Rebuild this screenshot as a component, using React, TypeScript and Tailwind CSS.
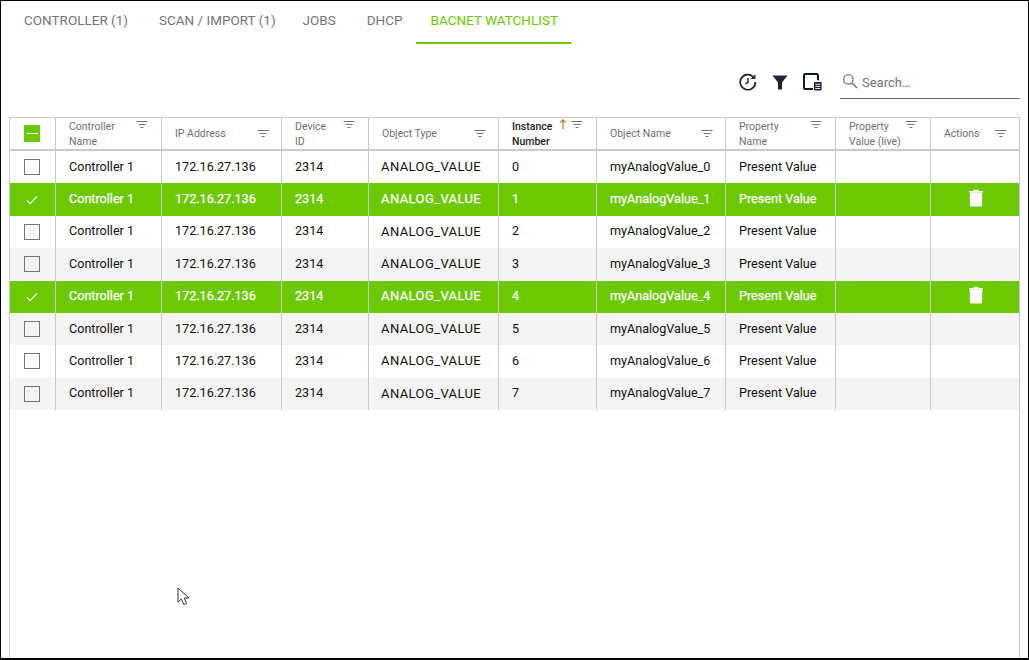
import React from "react";

const cols = "grid-cols-[45px_106px_120px_87px_130px_98px_129px_110px_95px_89px]";

function FilterIcon() {
  return (
    <svg width="12" height="8" viewBox="0 0 12 8" className="shrink-0 block">
      <path d="M0.5 0.5h11M2.5 3.5h7M4.5 6.5h3" stroke="#757575" strokeWidth="1" fill="none" />
    </svg>
  );
}

function Head({ lines, active, sort }: { lines: string[]; active?: boolean; sort?: boolean }) {
  const two = lines.length > 1;
  return (
    <div className={`border-l border-[#c9c9c9] pl-[13px] ${two ? "pr-[13px]" : "pr-[12px]"} flex relative h-full items-center justify-between`}>
      <div className={`text-[10.5px] leading-[15px] ${active ? "text-[#222] font-medium" : "text-[#6f6f6f]"}`}>
        {lines.map((l) => (
          <div key={l} className="whitespace-nowrap">{l}</div>
        ))}
      </div>
      <div className={`flex items-center ${two ? "self-start mt-[3px]" : ""}`}>
        {sort && (
          <svg width="8" height="11" viewBox="0 0 8 11" className="absolute left-[60px] top-[1px]">
            <path d="M4 10.5V1M1.2 3.6L4 0.8L6.8 3.6" stroke="#b5761e" strokeWidth="1.1" fill="none" />
          </svg>
        )}
        <FilterIcon />
      </div>
    </div>
  );
}

function Cell({ children, center }: { children?: React.ReactNode; center?: boolean }) {
  return (
    <div className={`border-l border-[#c9c9c9] h-full flex items-center ${center ? "justify-center" : "pl-[13px]"} whitespace-nowrap`}>
      {children}
    </div>
  );
}

function Trash() {
  return (
    <svg width="16" height="18" viewBox="0 0 16 18" className="-mt-[3px] ml-[2px]">
      <path d="M1 2h14v1.4H1zM5.5 0.8h5v1.4h-5z" fill="#fff" />
      <path d="M1.8 3.6h12.4V16a1.5 1.5 0 0 1-1.5 1.5H3.3A1.5 1.5 0 0 1 1.8 16z" fill="#fff" />
    </svg>
  );
}

export default function App() {
  const rows = [0, 1, 2, 3, 4, 5, 6, 7];
  return (
    <div className="w-[1029px] h-[660px] border border-black border-b-2 bg-white font-['Roboto',sans-serif] overflow-hidden flex flex-col relative">
      <div className="flex h-[43px] pl-2 text-[13.5px] text-[#757575]">
        <div className="pl-[15px] pr-[17px] pt-[11px] leading-[16px] whitespace-nowrap">CONTROLLER (1)</div>
        <div className="pl-[14px] pr-[12px] pt-[11px] leading-[16px] whitespace-nowrap">SCAN / IMPORT (1)</div>
        <div className="pl-[15px] pr-[16px] pt-[11px] leading-[16px] whitespace-nowrap">JOBS</div>
        <div className="pl-[15px] pr-[13px] pt-[11px] leading-[16px] whitespace-nowrap">DHCP</div>
        <div className="px-[15px] pt-[11px] leading-[16px] whitespace-nowrap text-[#6fc400] border-b-2 border-[#74c200] w-[155px]">BACNET WATCHLIST</div>
      </div>

      <div className="flex items-start h-[73px] pr-[8px] justify-end">
        <div className="flex items-center mt-[29px] mr-[18px] gap-[15px]">
          <svg width="18" height="18" viewBox="0 0 18 18">
            <path d="M14 3.6A7.6 7.6 0 1 0 16.4 9" stroke="#1b2430" strokeWidth="1.7" fill="none" />
            <path d="M16.4 1.2v4.8h-4.8z" fill="#1b2430" />
            <path d="M9 5v4.4l-2.6 1.6" stroke="#1b2430" strokeWidth="1.4" fill="none" />
          </svg>
          <svg width="16" height="15" viewBox="0 0 16 15">
            <path d="M0.5 0.5h15L10 7.6V14.5H6V7.6z" fill="#1b2430" />
          </svg>
          <svg width="19" height="18" viewBox="0 0 19 18">
            <path d="M10 16H2.2A1.2 1.2 0 0 1 1 14.8V2.2A1.2 1.2 0 0 1 2.2 1h11.6A1.2 1.2 0 0 1 15 2.2v5" stroke="#111827" strokeWidth="2" fill="none" />
            <rect x="11" y="9" width="7.6" height="8.6" rx="1" fill="#1b2430" />
            <path d="M12.4 11.3h4.8M12.4 13.4h4.8M12.4 15.5h4.8" stroke="#fff" strokeWidth="0.9" />
          </svg>
        </div>
        <div className="w-[180px] h-[34px] mt-[21px] border-b border-[#6b6b6b] flex items-center pl-[2px] gap-[4px] pt-[2px]">
          <svg width="16" height="16" viewBox="0 0 16 16" className="-mt-[3px]">
            <circle cx="6.4" cy="6.4" r="4.7" stroke="#757575" strokeWidth="1.3" fill="none" />
            <path d="M10 10l5 5" stroke="#757575" strokeWidth="1.6" />
          </svg>
          <span className="text-[13px] text-[#757575]">Search…</span>
        </div>
      </div>

      <div className="ml-[8px] w-[1011px] flex-1 border-x border-t border-[#c9c9c9] text-[12.6px] text-[#111]">
        <div className={`grid ${cols} h-[33px] border-b-2 border-[#cdc9c7]`}>
          <div className="flex items-center justify-center h-full">
            <div className="w-[16px] h-[17px] mr-px bg-[#6cc800] flex items-center justify-center">
              <div className="w-[11px] h-px bg-white" />
            </div>
          </div>
          <Head lines={["Controller", "Name"]} />
          <Head lines={["IP Address"]} />
          <Head lines={["Device", "ID"]} />
          <Head lines={["Object Type"]} />
          <Head lines={["Instance", "Number"]} active sort />
          <Head lines={["Object Name"]} />
          <Head lines={["Property", "Name"]} />
          <Head lines={["Property", "Value (live)"]} />
          <Head lines={["Actions"]} />
        </div>
        {rows.map((i) => {
          const sel = i === 1 || i === 4;
          const bg = sel ? "bg-[#6cc800] text-white [-webkit-text-stroke:0.25px_white]" : i % 2 === 1 ? "bg-[#f4f4f4]" : "bg-white";
          return (
            <div key={i} className={`grid ${cols} h-[32.375px] ${bg}`}>
              <div className="flex items-center justify-center h-full">
                {sel ? (
                  <svg width="12" height="10" viewBox="0 0 12 10" className="mr-px">
                    <path d="M1 5.4L4.2 8.6L11 1.4" stroke="#fff" strokeWidth="1.2" fill="none" />
                  </svg>
                ) : (
                  <div className="w-[16px] h-[16px] mr-px border border-[#757575]" />
                )}
              </div>
              <Cell>Controller 1</Cell>
              <Cell>172.16.27.136</Cell>
              <Cell>2314</Cell>
              <Cell>
                <span className="text-[13px] tracking-[0.4px] -mt-px -ml-px">ANALOG_VALUE</span>
              </Cell>
              <Cell>{i}</Cell>
              <Cell>myAnalogValue_{i}</Cell>
              <Cell>Present Value</Cell>
              <Cell />
              <Cell center>{sel ? <Trash /> : null}</Cell>
            </div>
          );
        })}
      </div>

      <svg width="14" height="20" viewBox="0 0 14 20" className="absolute left-[176px] top-[586px]">
        <path d="M1 1V15L4.4 12L6.8 17.6L9.6 16.4L7.2 11H12z" fill="#fff" stroke="#333" strokeWidth="1" />
      </svg>
    </div>
  );
}
